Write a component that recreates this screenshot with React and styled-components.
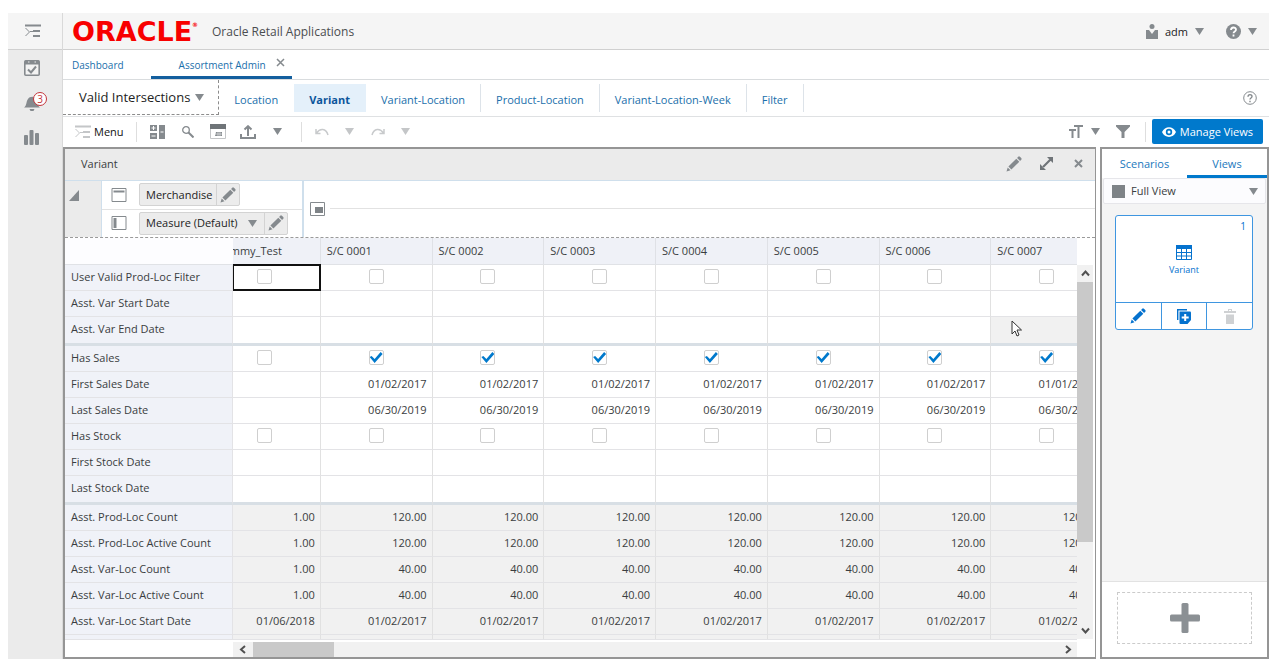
import React, { useEffect, useRef } from 'react';
import styled, { createGlobalStyle, css } from 'styled-components';

const GlobalStyle = createGlobalStyle`
  * {
    box-sizing: border-box;
  }

  body {
    margin: 0;
    background: #fff;
    color: #3a3d40;
    font-family: 'Open Sans', 'Noto Sans', sans-serif;
    font-size: 11px;
    line-height: 16px;
  }

  button, select, input {
    margin: 0;
    font: inherit;
    color: inherit;
  }

  svg {
    display: block;
    flex: none;
  }
`;

const Page = styled.div`
  display: flex;
  height: 100vh;
  padding: 13px 13px 12px 8px;
`;

const PlainButton = styled.button`
  display: flex;
  align-items: center;
  justify-content: center;
  padding: 0;
  border: 0;
  background: none;
  cursor: pointer;
`;

/* left rail */

const Rail = styled.nav`
  display: flex;
  flex-direction: column;
  flex: none;
  width: 55px;
  background: #ebebeb;
  border-right: 1px solid #d9d9d9;
`;

const RailTop = styled.div`
  display: flex;
  align-items: center;
  justify-content: center;
  height: 37px;
  padding-right: 4px;
  background: #f5f5f5;
  border-bottom: 1px solid #d0d0d0;
`;

const RailButton = styled(PlainButton)`
  position: relative;
  height: 35px;
  width: 48px;
`;

const Badge = styled.span`
  position: absolute;
  top: 7px;
  left: 25px;
  width: 14px;
  height: 14px;
  border: 1px solid #c3343a;
  border-radius: 50%;
  background: #fff;
  color: #c3343a;
  font-size: 10px;
  line-height: 12px;
  text-align: center;
`;

const Main = styled.div`
  display: flex;
  flex-direction: column;
  flex: 1;
  min-width: 0;
`;

/* top bars */

const Header = styled.header`
  display: flex;
  align-items: center;
  flex: none;
  height: 37px;
  padding: 1px 12px 0 9px;
  background: #f5f5f5;
  border-bottom: 1px solid #d0d0d0;
`;

const Brand = styled.span`
  width: 140px;
  color: #f80000;
  font-family: 'DejaVu Sans', sans-serif;
  font-size: 27px;
  font-weight: bold;
  line-height: 32px;
  white-space: nowrap;
`;

const Reg = styled.sup`
  font-size: 6px;
  line-height: 6px;
  vertical-align: 14px;
`;

const Title = styled.h1`
  flex: 1;
  margin: 0;
  color: #4a4d50;
  font-size: 12px;
  font-weight: normal;
`;

const UserMenu = styled(PlainButton)`
  gap: 7px;
  margin-left: 22px;
  color: #222;
`;

const TabBar = styled.div`
  display: flex;
  flex: none;
  height: 30px;
  border-bottom: 1px solid #d9dcde;
  padding-left: 9px;
`;

const PageTab = styled.div`
  display: flex;
  align-items: center;
  padding-top: 3px;
  color: #1a6fab;
  font-size: 10px;
  border-bottom: 3px solid ${props => props.$active ? '#135f9e' : 'transparent'};
  ${props => props.$active && css`
    margin-left: 27px;
    padding: 3px 7px 0 28px;
  `}
`;

const TabLink = styled.a`
  color: inherit;
  text-decoration: none;
`;

const CloseTab = styled(PlainButton)`
  margin: 0 0 4px 10px;
`;

const NavBar = styled.div`
  display: flex;
  align-items: center;
  flex: none;
  height: 37px;
  padding-right: 12px;
  border-bottom: 1px solid #dfe1e3;
`;

const Workspace = styled(PlainButton)`
  align-self: flex-start;
  gap: 5px;
  height: 35px;
  padding: 0 14px 0 16px;
  border-right: 1px dashed #8c8c8c;
  border-bottom: 1px dashed #8c8c8c;
  color: #222;
  font-size: 13px;
`;

const StepLink = styled.a`
  display: flex;
  align-items: center;
  height: 28px;
  padding: 3px 15px 0;
  border-right: 1px solid ${props => props.$active || props.$bare ? 'transparent' : '#dde3e9'};
  color: #1a6fab;
  text-decoration: none;
  white-space: nowrap;
  ${props => props.$active && css`
    background: #e4f0fa;
    color: #0b559b;
    font-weight: bold;
  `}
`;

const Spacer = styled.div`
  flex: 1;
`;

const Toolbar = styled.div`
  display: flex;
  align-items: center;
  flex: none;
  height: 30px;
  padding: 0 6px 1px 12px;
`;

const MenuButton = styled(PlainButton)`
  gap: 3px;
  color: #111;
`;

const ToolButton = styled(PlainButton)`
  width: ${props => props.$narrow ? '28px' : '30px'};
  height: 26px;
`;

const TextSize = styled(PlainButton)`
  gap: 7px;
  height: 26px;
  margin-right: 9px;
`;

const Divider = styled.span`
  width: 1px;
  height: 20px;
  margin: 0 6px 0 ${props => props.$wide ? '12px' : '8px'};
  background: #dedede;
`;

const ManageButton = styled(PlainButton)`
  gap: 4px;
  height: 25px;
  padding: 0 10px;
  border-radius: 2px;
  background: #0079cc;
  color: #fff;
`;

/* panels */

const Panels = styled.div`
  display: flex;
  gap: 4px;
  flex: 1;
  min-height: 0;
`;

const Panel = styled.section`
  display: flex;
  flex-direction: column;
  flex: 1;
  min-width: 0;
  border: 2px solid #959595;
  border-right-width: 1px;
`;

const PanelHeader = styled.div`
  display: flex;
  align-items: center;
  flex: none;
  height: 32px;
  padding: 0 1px 2px 16px;
  background: #ebebeb;
  border-bottom: 1px solid #cfdfec;
`;

const PanelTitle = styled.h2`
  flex: 1;
  margin: 0;
  font-size: 11px;
  font-weight: normal;
`;

const PanelAction = styled(PlainButton)`
  width: 32px;
  height: 24px;
`;

const Axes = styled.div`
  display: flex;
  flex: none;
  height: 57px;
  border-bottom: 1px dashed #9a9a9a;
`;

const Collapse = styled(PlainButton)`
  align-items: flex-start;
  justify-content: flex-start;
  width: 37px;
  padding: 9px 0 0 4px;
  background: #ebebeb;
  border-right: 1px solid #cfdfec;
`;

const AxisList = styled.div`
  width: 202px;
  border-right: 2px solid #cfdfec;
`;

const Axis = styled.div`
  display: flex;
  align-items: center;
  height: 28px;
  padding: 0 0 1px 9px;
  & + & {
    border-top: 1px solid #e2e2e2;
  }
`;

const Chip = styled.div`
  display: flex;
  height: 23px;
  margin-left: 12px;
  border: 1px solid #d3d3d3;
  border-radius: 2px;
  background: #ececec;
  color: #222;
`;

const ChipLabel = styled.span`
  padding: 3px 4px 0 6px;
`;

const ChipEdit = styled(PlainButton)`
  width: 23px;
  border-left: 1px solid #d3d3d3;
`;

const SelectWrap = styled.span`
  position: relative;
  display: flex;
  align-items: center;
  flex: ${props => props.$grow ? 1 : 'none'};
  & > svg {
    position: absolute;
    right: 7px;
    pointer-events: none;
  }
`;

const Select = styled.select`
  width: 100%;
  height: 21px;
  padding: 0 26px 0 6px;
  border: 0;
  background: none;
  appearance: none;
`;

const PageAxis = styled.div`
  display: flex;
  align-items: center;
  gap: 5px;
  flex: 1;
  padding: 0 0 1px 6px;
`;

const Rule = styled.span`
  flex: 1;
  height: 1px;
  background: #e2e2e2;
`;

/* grid */

const GridArea = styled.div`
  display: grid;
  grid-template-columns: 1fr 18px;
  grid-template-rows: 1fr 18px;
  flex: 1;
  min-height: 0;
`;

const Scroller = styled.div`
  overflow: hidden;
  min-width: 0;
  min-height: 0;
`;

/* one more column than fits, the row labels stay in place */
const Table = styled.table`
  width: calc(100% + 50px);
  table-layout: fixed;
  border-collapse: separate;
  border-spacing: 0;
`;

const Corner = styled.td`
  position: sticky;
  left: 0;
  z-index: 2;
  width: 168px;
  height: 27px;
  padding: 0;
  background: #fdfdff;
  border-bottom: 1px solid #e0e2e6;
`;

const ColHead = styled.th`
  height: 27px;
  padding: 0 6px;
  background: #eff1f7;
  border-right: 1px solid #dfe1e6;
  border-bottom: 1px solid #e0e2e6;
  font-weight: normal;
  text-align: left;
`;

const rowEdge = css`
  height: ${props => props.$last ? '29px' : '26px'};
  border-bottom: ${props => props.$last ? '3px solid #d8dfe5' : '1px solid #e3e3e6'};
`;

const RowHead = styled.th`
  position: sticky;
  left: 0;
  z-index: 2;
  padding: 0 6px 2px;
  background: #f0f2f8;
  border-right: 1px solid #e3e3e6;
  font-weight: normal;
  text-align: left;
  white-space: nowrap;
  ${rowEdge}
`;

const Cell = styled.td`
  position: relative;
  padding: 0 5px 2px;
  background: ${props => props.$shade ? '#f1f1f1' : '#fff'};
  border-right: 1px solid #e1e1e1;
  text-align: ${props => props.$check ? 'center' : 'right'};
  white-space: nowrap;
  ${rowEdge}
`;

const Focus = styled.span`
  position: absolute;
  top: -1px;
  right: -1px;
  bottom: -1px;
  left: 24px;
  border: 2px solid #111;
  border-left-width: 1px;
  pointer-events: none;
`;

const Pointer = styled.svg`
  position: absolute;
  top: 3px;
  left: 20px;
`;

const Check = styled.input`
  display: block;
  width: 15px;
  height: 15px;
  margin: 0 auto;
  border: 1px solid #cfcfcf;
  border-radius: 2px;
  background: #fff;
  appearance: none;
  &:checked::after {
    content: '';
    display: block;
    width: 13px;
    height: 13px;
    background: #0079cc;
    clip-path: polygon(0 6px, 2px 5px, 5px 8px, 11px 1px, 13px 3px, 5px 12px);
  }
`;

const VScroll = styled.div`
  display: flex;
  flex-direction: column;
  align-items: center;
  margin: 27px 2px 0 0;
  background: #f1f1f1;
`;

const HRow = styled.div`
  display: flex;
  padding-top: 2px;
  border-top: 1px solid #e3e3e6;
`;

const HScroll = styled.div`
  display: flex;
  flex: 1;
  margin-left: 168px;
  background: #f1f1f1;
`;

const Thumb = styled.div`
  background: #c9c9c9;
  ${props => props.$horizontal ? 'width: 81px;' : 'width: 100%; height: 260px; flex: 0 1 auto;'}
`;

const ArrowButton = styled(PlainButton)`
  flex: none;
  width: ${props => props.$horizontal ? '20px' : '16px'};
  height: ${props => props.$horizontal ? '15px' : '17px'};
`;

/* views side panel */

const Side = styled.aside`
  display: flex;
  flex-direction: column;
  flex: none;
  width: 169px;
  border: 2px solid #959595;
  background: #f4f4f4;
`;

const SideTabs = styled.div`
  display: flex;
  flex: none;
  height: 29px;
  background: #fff;
`;

const SideTab = styled(PlainButton)`
  flex: ${props => props.$active ? '0 0 80px' : '1'};
  padding-top: 3px;
  border-bottom: 3px solid ${props => props.$active ? '#0079cc' : 'transparent'};
  color: #1a78bd;
`;

const ViewPicker = styled.label`
  display: flex;
  align-items: center;
  height: 26px;
  margin: 0 1px;
  padding-left: 8px;
  border: 1px solid #e6e6ea;
  border-radius: 2px;
  background: #fcfcfe;
`;

const Swatch = styled.span`
  width: 13px;
  height: 13px;
  background: #7e8387;
`;

const Card = styled.div`
  margin: 11px 14px 0 13px;
  border: 1px solid #3f96e0;
  border-radius: 3px;
  background: #fff;
  color: #0572ce;
`;

const CardBody = styled.div`
  display: flex;
  flex-direction: column;
  height: 86px;
  padding: 2px 6px;
`;

const CardCount = styled.span`
  align-self: flex-end;
  font-size: 10px;
`;

const CardView = styled.div`
  display: flex;
  flex-direction: column;
  align-items: center;
  gap: 2px;
  margin-top: 11px;
  font-size: 9px;
`;

const CardActions = styled.div`
  display: flex;
  height: 27px;
  border-top: 1px solid #3f96e0;
`;

const CardAction = styled(PlainButton)`
  flex: 1;
  & + & {
    border-left: 1px solid #3f96e0;
  }
`;

const SideFooter = styled.div`
  margin-top: auto;
  padding: 10px 15px 13px 15px;
  border-top: 1px solid #e2e2e2;
  background: #fff;
`;

const AddView = styled(PlainButton)`
  width: 100%;
  height: 52px;
  border: 1px dashed #cbcbcb;
`;

const GREY = '#858a8e';

const Caret = ({ color = GREY, size = 9 }) => (
  <svg width={size} height="7" viewBox="0 0 9 7"><path d="M0 0h9L4.5 7z" fill={color} /></svg>
);

const Pencil = ({ color = GREY, size = 16 }) => (
  <svg width={size} height={size} viewBox="0 0 16 16" fill={color}>
    <path d="M0.5 15.5l1.2-4L4.5 14.3zM2.4 10.6L10.3 2.7l3 3L5.4 13.6zM11.1 1.9L12.2 0.8a1.2 1.2 0 0 1 1.7 0l1.3 1.3a1.2 1.2 0 0 1 0 1.7L14.1 4.9z" />
  </svg>
);

const MenuLines = ({ color = GREY }) => (
  <svg width="16" height="14" viewBox="0 0 16 14">
    <path d="M0 1.5h16M8 7h7M8 12h7" stroke={color} strokeWidth="2" />
    <path d="M0.5 4l4 4-4 4M5 7.5h3" stroke={color} fill="none" />
  </svg>
);

const Cross = ({ size = 9, width = 2 }) => (
  <svg width={size} height={size} viewBox="0 0 9 9">
    <path d="M1 1l7 7M8 1l-7 7" stroke={GREY} strokeWidth={width} />
  </svg>
);

const Chevron = ({ d }) => (
  <svg width="9" height="9" viewBox="0 0 9 9"><path d={d} stroke="#505050" strokeWidth="2" fill="none" /></svg>
);

const Undo = ({ flip }) => (
  <svg width="14" height="10" viewBox="0 0 14 10" fill="none" stroke="#c8cacc" strokeWidth="1.5">
    {flip
      ? <path d="M13 2v4.500H8.500M12.500 6C9 1 3 1 1 8" />
      : <path d="M1 2v4.500h4.500M1.500 6C5 1 11 1 13 8" />}
  </svg>
);

const columns = ['Dummy_Test', 'S/C 0001', 'S/C 0002', 'S/C 0003', 'S/C 0004', 'S/C 0005', 'S/C 0006', 'S/C 0007'];

const fill = (first, value, final = value) => columns.map((c, i) => {
  if (i === 0) return first;
  return i === 7 ? final : value;
});

const rows = [
  { label: 'User Valid Prod-Loc Filter', check: true, values: fill(false, false) },
  { label: 'Asst. Var Start Date', values: fill('', '') },
  { label: 'Asst. Var End Date', values: fill('', ''), last: true },
  { label: 'Has Sales', check: true, values: fill(false, true) },
  { label: 'First Sales Date', values: fill('', '01/02/2017', '01/01/2018') },
  { label: 'Last Sales Date', values: fill('', '06/30/2019') },
  { label: 'Has Stock', check: true, values: fill(false, false) },
  { label: 'First Stock Date', values: fill('', '') },
  { label: 'Last Stock Date', values: fill('', ''), last: true },
  { label: 'Asst. Prod-Loc Count', shade: true, values: fill('1.00', '120.00') },
  { label: 'Asst. Prod-Loc Active Count', shade: true, values: fill('1.00', '120.00') },
  { label: 'Asst. Var-Loc Count', shade: true, values: fill('1.00', '40.00') },
  { label: 'Asst. Var-Loc Active Count', shade: true, values: fill('1.00', '40.00') },
  { label: 'Asst. Var-Loc Start Date', shade: true, values: fill('01/06/2018', '01/02/2017') },
  { label: '', shade: true, values: fill('', '') }
];

const steps = ['Location', 'Variant', 'Variant-Location', 'Product-Location', 'Variant-Location-Week', 'Filter'];

const Grid = () => {
  const scroller = useRef(null);

  useEffect(() => {
    scroller.current.scrollLeft = 24;
  }, []);

  return (
    <GridArea>
      <Scroller ref={scroller}>
        <Table>
          <thead>
            <tr>
              <Corner />
              {columns.map(name => <ColHead key={name} scope="col">{name}</ColHead>)}
            </tr>
          </thead>
          <tbody>
            {rows.map((row, r) => (
              <tr key={row.label}>
                <RowHead scope="row" $last={row.last}>{row.label}</RowHead>
                {row.values.map((value, c) => (
                  <Cell key={columns[c]} $last={row.last} $check={row.check} $shade={row.shade || (r === 2 && c === 7)}>
                    {row.check
                      ? <Check type="checkbox" defaultChecked={value} aria-label={`${row.label} ${columns[c]}`} />
                      : value}
                    {r === 0 && c === 0 && <Focus />}
                    {r === 2 && c === 7 && (
                      <Pointer width="12" height="18" viewBox="0 0 12 18">
                        <path d="M1 1v13l3-3 2 5 2-1-2-5h4.500z" fill="#fff" stroke="#333" />
                      </Pointer>
                    )}
                  </Cell>
                ))}
              </tr>
            ))}
          </tbody>
        </Table>
      </Scroller>
      <VScroll>
        <ArrowButton aria-label="Scroll up"><Chevron d="M1 6.500l3.500-4 3.500 4" /></ArrowButton>
        <Thumb />
        <Spacer />
        <ArrowButton aria-label="Scroll down"><Chevron d="M1 2.500l3.500 4 3.500-4" /></ArrowButton>
      </VScroll>
      <HRow>
        <HScroll>
          <ArrowButton $horizontal aria-label="Scroll left"><Chevron d="M6 1l-4 3.500 4 3.500" /></ArrowButton>
          <Thumb $horizontal />
          <Spacer />
          <ArrowButton $horizontal aria-label="Scroll right"><Chevron d="M3 1l4 3.500-4 3.500" /></ArrowButton>
        </HScroll>
      </HRow>
    </GridArea>
  );
};

const LeftRail = () => (
  <Rail>
    <RailTop>
      <PlainButton aria-label="Navigation"><MenuLines /></PlainButton>
    </RailTop>
    <RailButton aria-label="Tasks">
      <svg width="16" height="16" viewBox="0 0 16 16">
        <rect x="0.800" y="0.800" width="14.400" height="14.400" rx="1" fill="#f3f3f3" stroke={GREY} strokeWidth="1.600" />
        <path d="M1 2.500h14" stroke={GREY} strokeWidth="4" />
        <path d="M4 2h1.500M10.500 2H12" stroke="#ebebeb" />
        <path d="M4 9.500l3 3 5-6" stroke={GREY} strokeWidth="2" fill="none" />
      </svg>
    </RailButton>
    <RailButton aria-label="Notifications">
      <svg width="16" height="16" viewBox="0 0 16 16" fill={GREY}>
        <path d="M0 12.500c3-2 2-6 4-8.500 1.500-3 7-3 8.500 0 2 2.500 0.500 6.500 3.500 8.500zM5.500 14h5l-1 2h-3z" />
      </svg>
      <Badge>3</Badge>
    </RailButton>
    <RailButton aria-label="Reports">
      <svg width="16" height="15" viewBox="0 0 16 15" fill={GREY}>
        <rect y="5" width="4" height="10" rx="1" />
        <rect x="5.500" width="4" height="15" rx="1" />
        <rect x="11" y="3" width="4" height="12" rx="1" />
      </svg>
    </RailButton>
  </Rail>
);

const SidePanel = () => (
  <Side>
    <SideTabs role="tablist">
      <SideTab role="tab">Scenarios</SideTab>
      <SideTab role="tab" $active>Views</SideTab>
    </SideTabs>
    <ViewPicker>
      <Swatch />
      <SelectWrap $grow>
        <Select aria-label="View"><option>Full View</option></Select>
        <Caret />
      </SelectWrap>
    </ViewPicker>
    <Card>
      <CardBody>
        <CardCount>1</CardCount>
        <CardView>
          <svg width="16" height="15" viewBox="0 0 16 15">
            <path d="M0.500 0.500h15v14h-15zM0.500 7.500h15M0.500 11h15M5.500 3v12M10.500 3v12" stroke="#0572ce" fill="none" />
            <path d="M0 0h16v4H0z" fill="#0572ce" />
          </svg>
          Variant
        </CardView>
      </CardBody>
      <CardActions>
        <CardAction aria-label="Edit view"><Pencil color="#0572ce" /></CardAction>
        <CardAction aria-label="Copy view">
          <svg width="14" height="15" viewBox="0 0 14 15">
            <path d="M0.700 11V0.700H10" stroke="#0572ce" strokeWidth="1.400" fill="none" />
            <path d="M2.500 2.500H13a1 1 0 0 1 1 1V11l-3.500 4h-7a1 1 0 0 1-1-1z" fill="#0572ce" />
            <path d="M8.200 5v7M4.700 8.500h7" stroke="#fff" strokeWidth="2" />
          </svg>
        </CardAction>
        <CardAction aria-label="Delete view" disabled>
          <svg width="12" height="15" viewBox="0 0 12 15" fill="#cfd1d3">
            <path d="M4 0h4v2h4v2H0V2h4zM2 5.500h8V15H2z" />
            <path d="M5 1h2v1H5z" fill="#fff" />
          </svg>
        </CardAction>
      </CardActions>
    </Card>
    <SideFooter>
      <AddView aria-label="Add view">
        <svg width="30" height="30" viewBox="0 0 30 30" fill="#8b9094">
          <rect x="11.500" width="7" height="30" rx="1.500" />
          <rect y="11.500" width="30" height="7" rx="1.500" />
        </svg>
      </AddView>
    </SideFooter>
  </Side>
);

const App = () => (
  <Page>
    <GlobalStyle />
    <LeftRail />
    <Main>
      <Header>
        <Brand>ORACLE<Reg>®</Reg></Brand>
        <Title>Oracle Retail Applications</Title>
        <UserMenu>
          <svg width="12" height="15" viewBox="0 0 12 15" fill={GREY}>
            <circle cx="6" cy="2.500" r="2.500" />
            <path d="M0 6h3l3 4 3-4h3v9H0z" />
          </svg>
          adm
          <Caret />
        </UserMenu>
        <UserMenu aria-label="Help">
          <svg width="15" height="15" viewBox="0 0 15 15">
            <circle cx="7.500" cy="7.500" r="7.500" fill={GREY} />
            <path d="M5 6c0-3.300 5-3.300 5-0.300 0 1.800-2.500 1.800-2.500 3.600M7.500 10.500v2" stroke="#fff" strokeWidth="1.800" fill="none" />
          </svg>
          <Caret />
        </UserMenu>
      </Header>

      <TabBar>
        <PageTab><TabLink href="#dashboard">Dashboard</TabLink></PageTab>
        <PageTab $active>
          <TabLink href="#assortment">Assortment Admin</TabLink>
          <CloseTab aria-label="Close tab"><Cross width={1.5} /></CloseTab>
        </PageTab>
      </TabBar>

      <NavBar>
        <Workspace>Valid Intersections <Caret /></Workspace>
        {steps.map(step => (
          <StepLink key={step} href={`#${step}`} $active={step === 'Variant'} $bare={step === 'Location'}>{step}</StepLink>
        ))}
        <Spacer />
        <PlainButton aria-label="Page help">
          <svg width="14" height="14" viewBox="0 0 14 14" fill="none" stroke={GREY}>
            <circle cx="7" cy="7" r="6.300" />
            <path d="M5 5.800c0-2.800 4-2.800 4-0.300 0 1.500-2 1.500-2 3M7 9.800v1.500" strokeWidth="1.400" />
          </svg>
        </PlainButton>
      </NavBar>

      <Toolbar>
        <MenuButton><MenuLines color="#c4c6c8" />Menu</MenuButton>
        <Divider $wide />
        <ToolButton aria-label="Layout">
          <svg width="15" height="14" viewBox="0 0 15 14" fill={GREY}>
            <path d="M0 0h7v6H0zM0 8h7v6H0zM9 0h6v14H9z" />
            <path d="M3.500 1v4M1.500 3h4M1.500 11h4M10.500 7h3" stroke="#fff" />
          </svg>
        </ToolButton>
        <ToolButton aria-label="Find">
          <svg width="12" height="12" viewBox="0 0 12 12" fill="none" stroke={GREY}>
            <circle cx="4" cy="4" r="3.300" strokeWidth="1.300" />
            <path d="M6.500 6.500l5 5" strokeWidth="2" />
          </svg>
        </ToolButton>
        <ToolButton aria-label="Calendar">
          <svg width="16" height="15" viewBox="0 0 16 15">
            <path d="M0.500 0.500h15v14h-15z" fill="#fff" stroke="#c4c6c8" />
            <path d="M0 0h16v5H0z" fill="#6f7478" />
            <path d="M6 8h6v4H5z" fill={GREY} />
            <path d="M5 10h8M8 8v4M10 8v4" stroke="#fff" strokeWidth="0.500" />
          </svg>
        </ToolButton>
        <ToolButton aria-label="Export">
          <svg width="16" height="14" viewBox="0 0 16 14" fill="none" stroke={GREY} strokeWidth="2">
            <path d="M1 9v4h14V9M8 11V2M4.500 4.500L8 1.200l3.500 3.300" />
          </svg>
        </ToolButton>
        <ToolButton aria-label="Export options"><Caret /></ToolButton>
        <Divider />
        <ToolButton $narrow aria-label="Undo"><Undo /></ToolButton>
        <ToolButton $narrow aria-label="Undo list"><Caret color="#c4c6c8" /></ToolButton>
        <ToolButton $narrow aria-label="Redo"><Undo flip /></ToolButton>
        <ToolButton $narrow aria-label="Redo list"><Caret color="#c4c6c8" /></ToolButton>
        <Spacer />
        <TextSize aria-label="Text size">
          <svg width="15" height="13" viewBox="0 0 15 13" fill="none" stroke={GREY} strokeWidth="2">
            <path d="M5 1h9M9.500 1v12M0 5h7M3.500 5v8" />
          </svg>
          <Caret />
        </TextSize>
        <ToolButton $narrow aria-label="Filter">
          <svg width="14" height="13" viewBox="0 0 14 13" fill={GREY}>
            <path d="M0 0h14v1.500L8.500 7v6h-3V7L0 1.500z" />
          </svg>
        </ToolButton>
        <Divider />
        <ManageButton>
          <svg width="14" height="10" viewBox="0 0 14 10">
            <path d="M0 5c3-6.500 11-6.500 14 0-3 6.500-11 6.500-14 0z" fill="#fff" />
            <circle cx="7" cy="5" r="3.200" fill="#0079cc" />
            <circle cx="7" cy="5" r="1.500" fill="#fff" />
          </svg>
          Manage Views
        </ManageButton>
      </Toolbar>

      <Panels>
        <Panel>
          <PanelHeader>
            <PanelTitle>Variant</PanelTitle>
            <PanelAction aria-label="Edit"><Pencil /></PanelAction>
            <PanelAction aria-label="Maximize">
              <svg width="13" height="13" viewBox="0 0 13 13" fill="#6f7478">
                <path d="M7 0h6v6zM0 7v6h6zM2 9.500L9.500 2l1.500 1.500L3.500 11z" />
              </svg>
            </PanelAction>
            <PanelAction aria-label="Close"><Cross /></PanelAction>
          </PanelHeader>
          <Axes>
            <Collapse aria-label="Collapse">
              <svg width="10" height="11" viewBox="0 0 10 11"><path d="M10 0v11H0z" fill={GREY} /></svg>
            </Collapse>
            <AxisList>
              <Axis>
                <svg width="16" height="14" viewBox="0 0 16 14">
                  <path d="M1 0.500h14v13H1z" fill="#fff" stroke={GREY} />
                  <path d="M2.500 3.500h11" stroke={GREY} strokeWidth="2" />
                </svg>
                <Chip>
                  <ChipLabel>Merchandise</ChipLabel>
                  <ChipEdit aria-label="Edit Merchandise"><Pencil /></ChipEdit>
                </Chip>
              </Axis>
              <Axis>
                <svg width="16" height="14" viewBox="0 0 16 14">
                  <path d="M1 0.500h14v13H1z" fill="#fff" stroke={GREY} />
                  <path d="M4 2v10" stroke={GREY} strokeWidth="3" />
                </svg>
                <Chip>
                  <SelectWrap>
                    <Select aria-label="Measure"><option>Measure (Default)</option></Select>
                    <Caret />
                  </SelectWrap>
                  <ChipEdit aria-label="Edit Measure"><Pencil /></ChipEdit>
                </Chip>
              </Axis>
            </AxisList>
            <PageAxis>
              <svg width="15" height="14" viewBox="0 0 15 14">
                <path d="M0.500 0.500h14v13H0.500z" fill="#fff" stroke={GREY} />
                <path d="M5 5h8v6H5z" fill="#7e8387" />
              </svg>
              <Rule />
            </PageAxis>
          </Axes>
          <Grid />
        </Panel>
        <SidePanel />
      </Panels>
    </Main>
  </Page>
);

export default App;
